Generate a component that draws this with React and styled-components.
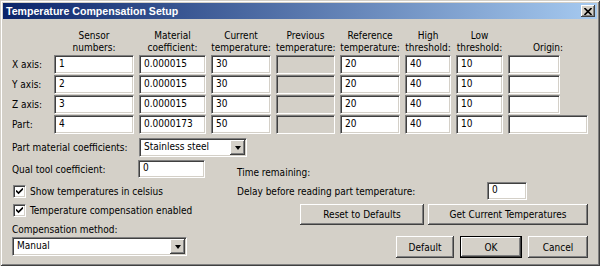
import styled, { createGlobalStyle } from "styled-components";

const GlobalStyle = createGlobalStyle`
  html, body { margin: 0; padding: 0; background: #d4d0c8; }
  body {
    font-family: "DejaVu Sans Condensed", "Liberation Sans", Arial, sans-serif;
    font-size: 10px;
    color: #000;
  }
`;

const Window = styled.div`
  width: 600px;
  height: 266px;
  box-sizing: border-box;
  padding: 3px;
  background: #d4d0c8;
  box-shadow: inset 1px 1px 0 #d4d0c8, inset -1px -1px 0 #404040,
    inset 2px 2px 0 #fff, inset -2px -2px 0 #808080;
  display: flex;
  flex-direction: column;
`;

const TitleBar = styled.div`
  height: 16px;
  display: flex;
  align-items: center;
  justify-content: space-between;
  padding: 0 2px 0 3px;
  background: linear-gradient(to right, #0a246a, #a6caf0);
  color: #fff;
  font-family: "Liberation Sans", Arial, sans-serif;
  font-weight: bold;
  font-size: 10.6px;
`;

const CloseButton = styled.div`
  width: 14px;
  height: 12px;
  box-sizing: border-box;
  background: #d4d0c8;
  box-shadow: inset -1px -1px 0 #404040, inset 1px 1px 0 #fff,
    inset -2px -2px 0 #808080;
  display: flex;
  align-items: center;
  justify-content: center;
`;

const Body = styled.div`
  flex: 1;
  padding: 11px 9px 0 9px;
  display: flex;
  flex-direction: column;
`;

const Table = styled.div`
  display: grid;
  grid-template-columns: 37px 80px 67px 60px 59px 60px 46px 47px 80px;
  column-gap: 5px;
  row-gap: 1px;
  align-items: center;
`;

const Header = styled.div`
  align-self: end;
  text-align: center;
  line-height: 12px;
  height: 24px;
  display: flex;
  flex-direction: column;
  justify-content: flex-end;
  white-space: nowrap;
`;

const RowLabel = styled.div`
  line-height: 19px;
`;

const Field = styled.div`
  box-sizing: border-box;
  height: ${(p) => p.$h || 19}px;
  width: ${(p) => (p.$w ? `${p.$w}px` : "100%")};
  padding: 0 4px;
  line-height: ${(p) => (p.$h || 19) - 4}px;
  background: ${(p) => (p.$disabled ? "#d4d0c8" : "#fff")};
  border: 1px solid;
  border-color: #808080 #fff #fff #808080;
  box-shadow: inset 1px 1px 0 #404040, inset -1px -1px 0 #d4d0c8;
  white-space: nowrap;
`;

const Select = styled(Field)`
  display: flex;
  justify-content: space-between;
  padding: 0 0 0 4px;
`;

const DropButton = styled.div`
  width: 15px;
  margin: 1px 1px 1px 0;
  box-sizing: border-box;
  background: #d4d0c8;
  box-shadow: inset -1px -1px 0 #404040, inset 1px 1px 0 #fff,
    inset -2px -2px 0 #808080;
  display: flex;
  align-items: center;
  justify-content: center;

  &::after {
    content: "";
    border-left: 3.5px solid transparent;
    border-right: 3.5px solid transparent;
    border-top: 4px solid #000;
  }
`;

const Lower = styled.div`
  margin-top: 4px;
  display: flex;
  flex-direction: column;
`;

const FieldRow = styled.div`
  display: flex;
  align-items: center;
  height: ${(p) => p.$h || 19}px;
  margin-top: ${(p) => p.$mt || 0}px;
`;

const FieldLabel = styled.div`
  width: ${(p) => p.$w}px;
  flex-shrink: 0;
`;

const Columns = styled.div`
  display: flex;
  margin-top: 3px;
`;

const LeftCol = styled.div`
  width: 225px;
  display: flex;
  flex-direction: column;
`;

const RightCol = styled.div`
  flex: 1;
  display: flex;
  flex-direction: column;
`;

const CheckRow = styled.label`
  display: flex;
  align-items: center;
  gap: 4px;
  height: 18px;
  margin-top: ${(p) => p.$mt}px;
  padding-left: 1px;
`;

const CheckBox = styled.span`
  width: 13px;
  height: 13px;
  box-sizing: border-box;
  background: #fff;
  border: 1px solid;
  border-color: #808080 #fff #fff #808080;
  box-shadow: inset 1px 1px 0 #404040, inset -1px -1px 0 #d4d0c8;
  display: flex;
  align-items: center;
  justify-content: center;
`;

const Caption = styled.div`
  line-height: 12px;
  margin-top: ${(p) => p.$mt}px;
`;

const ButtonRow = styled.div`
  display: flex;
  justify-content: flex-end;
  gap: ${(p) => p.$gap}px;
  margin-top: ${(p) => p.$mt}px;
`;

const Button = styled.div`
  box-sizing: border-box;
  width: ${(p) => p.$w}px;
  height: ${(p) => p.$h}px;
  display: flex;
  align-items: center;
  justify-content: center;
  background: #d4d0c8;
  border: ${(p) => (p.$default ? "1px solid #000" : "none")};
  box-shadow: inset -1px -1px 0 #404040, inset 1px 1px 0 #fff,
    inset -2px -2px 0 #808080;
`;

const headers = [
  ["Sensor", "numbers:"],
  ["Material", "coefficient:"],
  ["Current", "temperature:"],
  ["Previous", "temperature:"],
  ["Reference", "temperature:"],
  ["High", "threshold:"],
  ["Low", "threshold:"],
  ["Origin:"],
];

const rows = [
  { label: "X axis:", vals: ["1", "0.000015", "30", "20", "40", "10"] },
  { label: "Y axis:", vals: ["2", "0.000015", "30", "20", "40", "10"] },
  { label: "Z axis:", vals: ["3", "0.000015", "30", "20", "40", "10"] },
  { label: "Part:", vals: ["4", "0.0000173", "50", "20", "40", "10"], wide: true },
];

const Check = () => (
  <svg width="7" height="7" viewBox="0 0 7 7">
    <path d="M0 2.5 L2.5 5 L7 0.5" stroke="#000" strokeWidth="1.6" fill="none" />
  </svg>
);

export default function App() {
  return (
    <>
      <GlobalStyle />
      <Window>
        <TitleBar>
          <span>Temperature Compensation Setup</span>
          <CloseButton>
            <svg width="8" height="7" viewBox="0 0 8 7">
              <path d="M0.5 0 L7.5 7 M7.5 0 L0.5 7" stroke="#000" strokeWidth="1.6" />
            </svg>
          </CloseButton>
        </TitleBar>
        <Body>
          <Table>
            <div />
            {headers.map((h, i) => (
              <Header key={i}>
                {h.map((line) => (
                  <span key={line}>{line}</span>
                ))}
              </Header>
            ))}
            {rows.map((r) => (
              <>
                <RowLabel key={r.label}>{r.label}</RowLabel>
                <Field>{r.vals[0]}</Field>
                <Field>{r.vals[1]}</Field>
                <Field>{r.vals[2]}</Field>
                <Field $disabled />
                <Field>{r.vals[3]}</Field>
                <Field>{r.vals[4]}</Field>
                <Field>{r.vals[5]}</Field>
                <Field $w={r.wide ? 80 : 52} />
              </>
            ))}
          </Table>

          <Lower>
            <FieldRow>
              <FieldLabel $w={127}>Part material coefficients:</FieldLabel>
              <Select $w={108}>
                <span>Stainless steel</span>
                <DropButton />
              </Select>
            </FieldRow>
            <Columns>
              <LeftCol>
                <FieldRow $h={18}>
                  <FieldLabel $w={126}>Qual tool coefficient:</FieldLabel>
                  <Field $w={67} $h={18}>0</Field>
                </FieldRow>
                <CheckRow $mt={4}>
                  <CheckBox><Check /></CheckBox>
                  Show temperatures in celsius
                </CheckRow>
                <CheckRow $mt={1}>
                  <CheckBox><Check /></CheckBox>
                  Temperature compensation enabled
                </CheckRow>
                <Caption $mt={5}>Compensation method:</Caption>
                <FieldRow $mt={1}>
                  <Select $w={175}>
                    <span>Manual</span>
                    <DropButton />
                  </Select>
                </FieldRow>
              </LeftCol>
              <RightCol>
                <Caption $mt={7}>Time remaining:</Caption>
                <FieldRow $h={18} $mt={3}>
                  <FieldLabel $w={250}>Delay before reading part temperature:</FieldLabel>
                  <Field $w={40} $h={18}>0</Field>
                </FieldRow>
                <ButtonRow $gap={4} $mt={4}>
                  <Button $w={124} $h={21}>Reset to Defaults</Button>
                  <Button $w={160} $h={21}>Get Current Temperatures</Button>
                </ButtonRow>
                <ButtonRow $gap={6} $mt={11}>
                  <Button $w={58} $h={22}>Default</Button>
                  <Button $w={62} $h={22} $default>OK</Button>
                  <Button $w={60} $h={22}>Cancel</Button>
                </ButtonRow>
              </RightCol>
            </Columns>
          </Lower>
        </Body>
      </Window>
    </>
  );
}
